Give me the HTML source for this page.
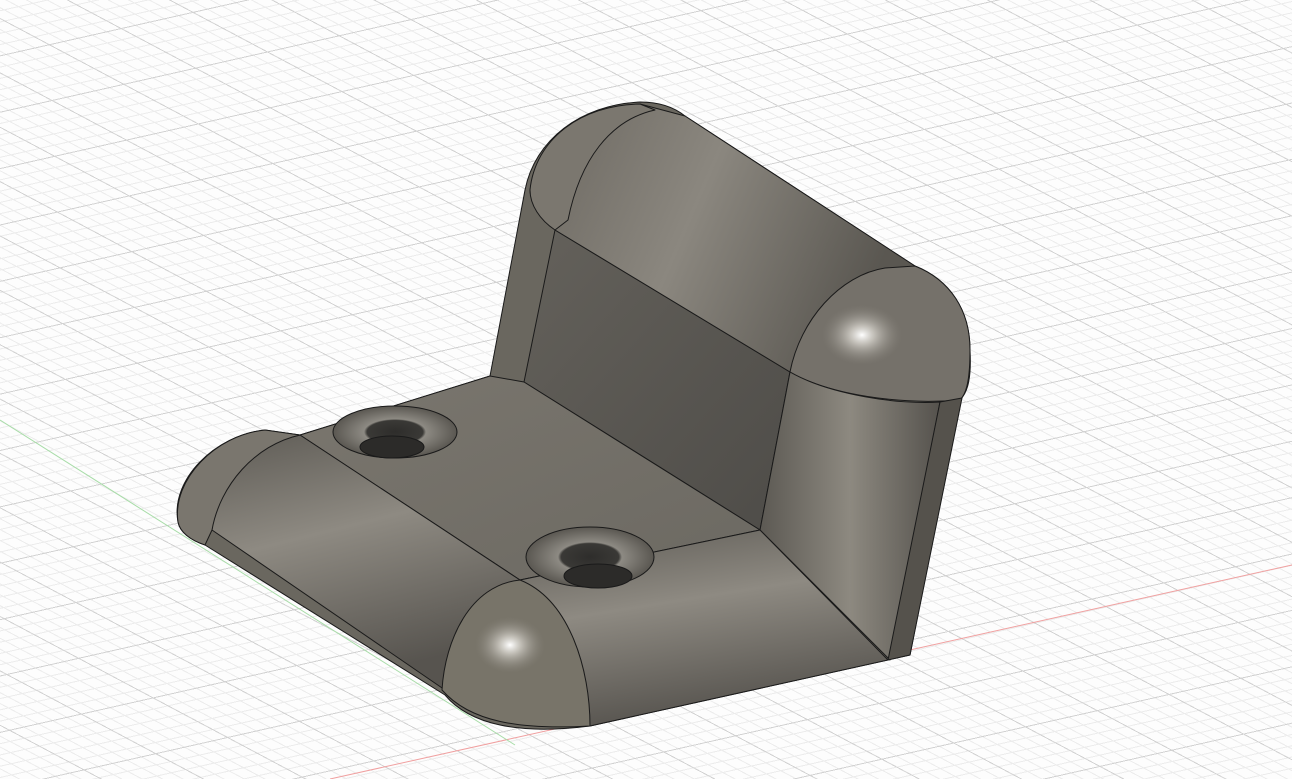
<!DOCTYPE html>
<html><head><meta charset="utf-8"><style>
html,body{margin:0;padding:0;width:1292px;height:779px;overflow:hidden}
body{background-color:#fdfdfd;
background-image:
repeating-linear-gradient(167.3deg,transparent 0 54px,#d2d2d2 54px 55px),
repeating-linear-gradient(28deg,transparent 0 47px,#d2d2d2 47px 48px),
repeating-linear-gradient(167.3deg,transparent 0 10px,#ececec 10px 11px),
repeating-linear-gradient(28deg,transparent 0 8.6px,#ececec 8.6px 9.6px);}
svg{display:block}
</style></head><body>
<svg width="1292" height="779" viewBox="0 0 1292 779">
<defs>
<linearGradient id="rollF" x1="0" y1="0" x2="0.3" y2="1"><stop offset="0" stop-color="#5e5b55"/><stop offset="0.45" stop-color="#8e8a82"/><stop offset="1" stop-color="#57544f"/></linearGradient>
<linearGradient id="rollT" x1="0" y1="0" x2="1" y2="0.3"><stop offset="0" stop-color="#6a665f"/><stop offset="0.5" stop-color="#8b877f"/><stop offset="1" stop-color="#5a5751"/></linearGradient>
<linearGradient id="wall" x1="0" y1="0" x2="1" y2="1"><stop offset="0" stop-color="#64615b"/><stop offset="1" stop-color="#4e4c48"/></linearGradient>
<linearGradient id="base" x1="0" y1="0" x2="1" y2="1"><stop offset="0" stop-color="#7a766e"/><stop offset="1" stop-color="#6c6962"/></linearGradient>
<linearGradient id="side" x1="0" y1="0" x2="1" y2="0"><stop offset="0" stop-color="#5c5953"/><stop offset="0.5" stop-color="#8d8980"/><stop offset="1" stop-color="#55524d"/></linearGradient>
<radialGradient id="hl"><stop offset="0" stop-color="#fff"/><stop offset="0.3" stop-color="#d6d3cc" stop-opacity=".8"/><stop offset="1" stop-color="#8a867e" stop-opacity="0"/></radialGradient>
<radialGradient id="hole"><stop offset="0" stop-color="#2e2d2b"/><stop offset="0.45" stop-color="#3a3936"/><stop offset="0.5" stop-color="#8d8a83"/><stop offset="1" stop-color="#5a5751"/></radialGradient>
</defs>
<line x1="330" y1="779" x2="1292" y2="565" stroke="#f0a0a0" stroke-width="1"/>
<line x1="0" y1="420" x2="515" y2="745" stroke="#a8dca8" stroke-width="1"/>
<g stroke="#1a1a1a" stroke-width="1" stroke-linejoin="round">
<path d="M178 522 C170 480 215 435 265 430 L300 435 L490 376 L525 190 C535 140 580 105 640 102 C660 102 675 108 685 116 L915 266 C950 280 970 310 970 350 C972 385 965 395 960 400 L910 655 L590 726 C520 735 470 725 445 695 L205 545 C190 540 180 532 178 522 Z" fill="#6a675f"/>
<path d="M555 230 L790 372 L760 530 L524 382 Z" fill="url(#wall)"/>
<path d="M300 435 L490 376 L524 382 L760 530 L520 580 Z" fill="url(#base)"/>
<path d="M555 230 C540 215 530 200 530 190 C540 140 580 110 640 104 L685 116 L915 266 C880 272 850 290 830 310 C810 330 795 350 790 372 Z" fill="url(#rollT)"/>
<path d="M530 190 C535 140 580 105 640 104 L655 110 C610 120 580 160 568 220 L555 230 C540 220 530 205 530 190 Z" fill="#7b776f"/>
<path d="M790 372 C800 320 840 275 885 268 L915 266 C950 280 970 310 970 350 C970 385 965 395 960 400 C900 405 830 395 790 372 Z" fill="#75716a"/>
<ellipse cx="862" cy="335" rx="40" ry="30" fill="url(#hl)" stroke="none"/>
<path d="M790 372 C830 395 900 405 940 402 L890 660 L760 530 Z" fill="url(#side)"/>
<path d="M940 402 L962 398 L910 655 L888 660 Z" fill="#55524c"/>
<path d="M520 580 L760 530 L888 660 L590 726 C560 700 545 640 520 580 Z" fill="url(#rollF)"/>
<path d="M300 435 L520 580 C480 590 455 630 445 690 L212 530 C215 490 250 445 300 435 Z" fill="url(#rollF)"/>
<path d="M178 522 C172 480 215 435 265 430 L300 435 C255 445 220 485 212 530 L205 545 C190 540 180 532 178 522 Z" fill="#7a766e"/>
<path d="M520 580 C470 585 445 640 442 690 C470 722 520 730 590 726 C590 670 570 600 520 580 Z" fill="#787469"/>
<ellipse cx="510" cy="645" rx="35" ry="28" fill="url(#hl)" stroke="none"/>
<ellipse cx="395" cy="432" rx="62" ry="26" fill="url(#hole)"/>
<ellipse cx="590" cy="557" rx="64" ry="30" fill="url(#hole)"/>
<ellipse cx="392" cy="447" rx="32" ry="11" fill="#2c2b29"/>
<ellipse cx="598" cy="576" rx="34" ry="12" fill="#2c2b29"/>
</g>
</svg>
</body></html>
